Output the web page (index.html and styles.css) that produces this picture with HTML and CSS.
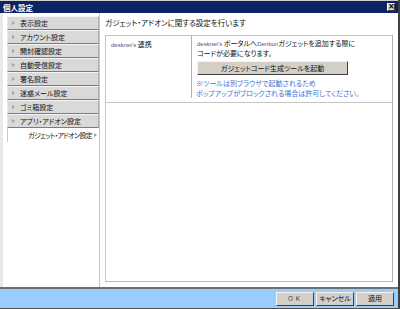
FILE: index.html
```html
<!DOCTYPE html>
<html lang="ja">
<head>
    <meta charset="UTF-8">
    <title>個人設定</title>
    <link rel="stylesheet" href="styles.css">
</head>
<body>
    <div class="window">
        <div class="titlebar">
            <span class="title">個人設定</span>
            <span class="close">×</span>
        </div>

        <div class="main">
            <ul class="nav">
                <li class="nav-item">表示設定</li>
                <li class="nav-item">アカウント設定</li>
                <li class="nav-item">開封確認設定</li>
                <li class="nav-item">自動受信設定</li>
                <li class="nav-item">署名設定</li>
                <li class="nav-item">迷惑メール設定</li>
                <li class="nav-item">ゴミ箱設定</li>
                <li class="nav-item">アプリ・アドオン設定</li>
                <li class="nav-item active">ガジェット・アドオン設定</li>
            </ul>

            <div class="content">
                <p class="lead">ガジェット・アドオンに関する設定を行います</p>
                <div class="box">
                    <div class="row">
                        <div class="label"><span class="latin">desknet's</span> 連携</div>
                        <div class="value">
                            <p><span class="latin">desknet's</span> ポータルへ<span class="latin">Denbun</span>ガジェットを追加する際に<br>コードが必要になります。</p>
                            <button class="btn tool-btn">ガジェットコード生成ツールを起動</button>
                            <p class="note">※ツールは別ブラウザで起動されるため<br>ポップアップがブロックされる場合は許可してください。</p>
                        </div>
                    </div>
                </div>
            </div>
        </div>

        <div class="footer">
            <button class="btn foot-btn ok">ＯＫ</button>
            <button class="btn foot-btn">キャンセル</button>
            <button class="btn foot-btn">適用</button>
        </div>
    </div>
</body>
</html>
```

FILE: styles.css
```css
* {
    box-sizing: border-box;
}
body {
    margin: 0;
    font-family: "Noto Sans CJK JP", "Noto Sans", sans-serif;
    font-size: 7px;
    font-feature-settings: "palt";
    color: #111;
    background: #fff;
}
.window {
    width: 400px;
    height: 309px;
    display: flex;
    flex-direction: column;
    background: #ebe9e4;
    border-right: 2px solid #404040;
    border-bottom: 1px solid #505050;
}
.titlebar {
    height: 13px;
    display: flex;
    align-items: center;
    justify-content: space-between;
    padding: 0 3px 0 3px;
    background: #0c2463;
    border-top: 1px solid #d0d0d0;
}
.title {
    color: #fff;
    font-weight: bold;
    font-size: 7.5px;
}
.close {
    width: 8px;
    height: 8px;
    background: #d4d0c8;
    border: 1px solid #fff;
    border-right-color: #404040;
    border-bottom-color: #404040;
    font-size: 8px;
    line-height: 5px;
    text-align: center;
    font-weight: bold;
    color: #000;
    font-family: "DejaVu Sans", sans-serif;
}
.main {
    flex: 1;
    display: flex;
    padding-left: 3px;
    border-bottom: 2px solid #707070;
}
.nav {
    list-style: none;
    margin: 0;
    padding: 3px 0 0 4px;
    width: 97px;
    background: #fff;
    border-right: 1px solid #c4c4c4;
}
.nav-item {
    position: relative;
    height: 14px;
    line-height: 12px;
    padding-left: 12px;
    background: #d9d9d9;
    border-top: 1px solid #f4f4f4;
    border-left: 1px solid #e8e8e8;
    border-right: 1px solid #b0b0b0;
    border-bottom: 1px solid #7c7c7c;
    white-space: nowrap;
}
.nav-item::before {
    content: "";
    position: absolute;
    left: 4px;
    top: 4px;
    border-left: 3px solid #a0a0a0;
    border-top: 2px solid transparent;
    border-bottom: 2px solid transparent;
}
.nav-item.active {
    background: #fff;
    border: none;
    border-left: 1px solid #c8c8c8;
    padding-left: 20px;
    height: 14px;
    line-height: 14px;
    letter-spacing: -0.7px;
}
.nav-item.active::before {
    left: auto;
    right: 2px;
    top: 5px;
}
.content {
    flex: 1;
    background: #fff;
    padding: 2px 5px 5px 5px;
    display: flex;
    flex-direction: column;
}
.lead {
    margin: 0;
    height: 20px;
    line-height: 16px;
    font-size: 7.5px;
}
.box {
    flex: 1;
    border: 1px solid #c4c4c4;
    border-right: 1px solid #b0b0b0;
    border-bottom: 1px solid #b8b8b8;
}
.row {
    display: flex;
    height: 67px;
    border-bottom: 1px solid #c4c4c4;
}
.label {
    width: 86px;
    padding: 3px 0 0 5px;
    border-right: 1px solid #b0b0b0;
    margin-bottom: 4px;
}
.value {
    flex: 1;
    padding: 3px 0 0 5px;
}
.value p {
    margin: 0;
    line-height: 9px;
}
.latin {
    font-family: "Liberation Sans", sans-serif;
    font-size: 6px;
    color: #5a4c8c;
}
.btn {
    font-family: "Noto Sans CJK JP", sans-serif;
    font-size: 7px;
    font-feature-settings: "palt";
    color: #111;
    background: #d4d0c8;
    border: 1px solid #f4f4f4;
    border-right-color: #404040;
    border-bottom-color: #404040;
    padding: 0;
    cursor: pointer;
}
.tool-btn {
    display: block;
    width: 151px;
    height: 14px;
    margin: 3px 0 3px 0;
    line-height: 11px;
}
.value .note {
    color: #3f73d4;
    line-height: 10px;
    margin-left: -1px;
}
.footer {
    height: 19px;
    background: #99ccff;
    display: flex;
    justify-content: flex-end;
    align-items: center;
    gap: 2px;
    padding-right: 4px;
}
.foot-btn {
    width: 38px;
    height: 14px;
    line-height: 11px;
}
.foot-btn.ok {
    color: #444;
    font-size: 6px;
    letter-spacing: 2px;
}
```
